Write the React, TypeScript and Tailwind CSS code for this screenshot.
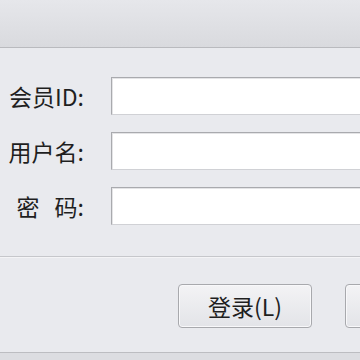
const font = { fontFamily: '"Noto Sans CJK SC", "Noto Sans", sans-serif' }

const Row = ({ label }: { label: React.ReactNode }) => (
    <div className="flex items-center h-[38px]">
        <div className="w-[84px] shrink-0 flex justify-end text-[23px] leading-none text-[#1f1f1f] whitespace-pre">{label}</div>
        <div className="ml-[27px] w-[300px] h-[38px] shrink-0 bg-white border border-[#a9aaae] border-r-[#d0d1d5] border-b-[#d0d1d5] shadow-[inset_1px_1px_0_#e4e4e6]" />
    </div>
)

const Btn = ({ text }: { text?: string }) => (
    <button className="w-[134px] h-[44px] shrink-0 rounded-[4px] border border-[#a8a9ad] bg-gradient-to-b from-[#f3f3f5] to-[#e3e4e8] text-[23px] leading-none text-[#1f1f1f] shadow-[inset_0_0_0_1px_#f8f8fa]">
        {text}
    </button>
)

export default function App() {
    return (
        <div className="w-[360px] h-[360px] overflow-hidden bg-[#e9eaee] flex flex-col" style={font}>
            <div className="h-[48px] shrink-0 bg-gradient-to-b from-[#e6e7eb] to-[#d9dade] border-b border-[#b9babe]" />
            <div className="flex flex-col gap-[17px] pt-[29px]">
                <Row label="会员ID:" />
                <Row label="用户名:" />
                <Row label={<><span>密</span><span className="w-[15px]" /><span>码:</span></>} />
            </div>
            <div className="mt-[31px] h-[2px] shrink-0 border-t border-[#c6c7cb] border-b border-b-[#f4f4f6]" />
            <div className="flex gap-[33px] pl-[178px] pt-[26px]">
                <Btn text="登录(L)" />
                <Btn />
            </div>
            <div className="mt-[24px] flex-1 border-t border-[#bcbdc1] bg-[#dcdde1]" />
        </div>
    )
}
